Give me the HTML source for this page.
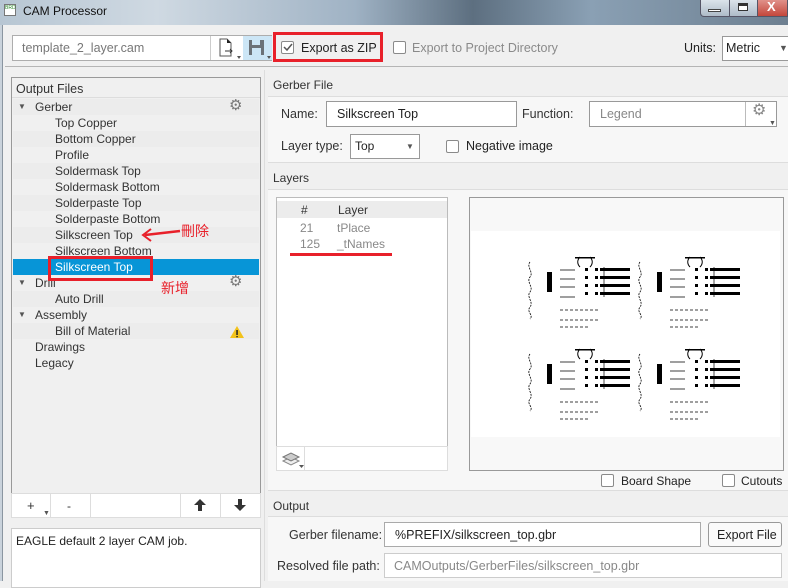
<!DOCTYPE html>
<html><head><meta charset="utf-8"><style>
*{box-sizing:border-box;margin:0;padding:0}
body{width:788px;height:581px;overflow:hidden;background:#f0f0f0;font-family:"Liberation Sans","Noto Sans CJK SC",sans-serif;font-size:12px;color:#333;position:relative}
.a{position:absolute}
.t{position:absolute;white-space:nowrap;line-height:16px}
.inp{position:absolute;background:#fff;border:1px solid #adadad}
.cb{position:absolute;width:13px;height:13px;border:1px solid #8a8a8a;border-radius:2px;background:#fff}
.row{position:absolute;left:13px;width:246px;height:16px;line-height:16px;white-space:nowrap}
.red{color:#e8202a}
</style></head><body>
<div class="a" style="left:0;top:0;width:788px;height:25px;background:linear-gradient(90deg,#b7c6d3 0%,#cfd9e2 20%,#9fb2c4 45%,#5d6f80 60%,#8aa0b4 75%,#6d7f90 100%)"></div>
<div class="a" style="left:4px;top:4px;width:12px;height:12px;background:#fff;border:1px solid #777;font-size:5px;color:#2a8a2a;line-height:6px">BRD</div>
<div class="t" style="left:23px;top:3px;color:#111;font-size:12px">CAM Processor</div>
<div class="a" style="left:700px;top:0;width:88px;height:17px;border:1px solid #556;border-top:none;border-radius:0 0 4px 4px;background:linear-gradient(#dbe3ea,#aebbc8)"></div>
<div class="a" style="left:729px;top:0;width:1px;height:17px;background:#556"></div>
<div class="a" style="left:757px;top:0;width:31px;height:17px;background:linear-gradient(#e0918a,#c4473b);border:1px solid #556;border-top:none"></div>
<div class="t" style="left:767px;top:-1px;color:#fff;font-weight:bold;font-size:13px">X</div>
<div class="a" style="left:708px;top:9px;width:13px;height:3px;background:#fff;border:1px solid #444"></div>
<div class="a" style="left:738px;top:3px;width:10px;height:8px;border:1px solid #333;border-top-width:3px;background:#fff"></div>
<div class="a" style="left:0;top:25px;width:3px;height:556px;background:#c9d2db;border-right:1px solid #8a95a0"></div>

<div class="inp" style="left:12px;top:35px;width:260px;height:26px"></div>
<div class="t" style="left:22px;top:40px;color:#777;font-size:12.5px">template_2_layer.cam</div>
<div class="a" style="left:210px;top:36px;width:1px;height:24px;background:#ccc"></div>
<svg class="a" style="left:218px;top:38px" width="24" height="22"><path d="M2 1h7l4 4v13H2z" fill="#fff" stroke="#555"/><path d="M9 1v4h4z" fill="#222"/><path d="M7 13h7M12 11l2 2-2 2" stroke="#333" fill="none"/><path d="M19 18l4 0-2 3z" fill="#555"/></svg>
<div class="a" style="left:243px;top:36px;width:29px;height:24px;background:#cce6f6"></div>
<svg class="a" style="left:248px;top:38px" width="24" height="22"><rect x="1" y="2" width="15" height="15" fill="#6b7278"/><rect x="4" y="2" width="8" height="5" fill="#cce6f6"/><rect x="4" y="10" width="9" height="7" fill="#cce6f6"/><path d="M19 18l4 0-2 3z" fill="#555"/></svg>
<div class="a" style="left:273px;top:32px;width:110px;height:30px;border:3px solid #e8202a"></div>
<div class="cb" style="left:281px;top:41px"></div>
<svg class="a" style="left:283px;top:43px" width="10" height="9"><path d="M1 4l3 3 5-6" stroke="#555" stroke-width="1.5" fill="none"/></svg>
<div class="t" style="left:301px;top:40px;color:#222;font-size:12.5px">Export as ZIP</div>
<div class="cb" style="left:393px;top:41px"></div>
<div class="t" style="left:412px;top:40px;color:#8a8a8a;font-size:12.5px">Export to Project Directory</div>
<div class="t" style="left:684px;top:40px;color:#222;font-size:12.5px">Units:</div>
<div class="inp" style="left:722px;top:36px;width:70px;height:25px;border-color:#999"></div>
<div class="t" style="left:726px;top:40px;color:#222;font-size:12.5px">Metric</div>
<div class="t" style="left:779px;top:40px;font-size:9px;color:#555">▼</div>
<div class="a" style="left:5px;top:66px;width:783px;height:1px;background:#b5b5b5"></div>

<!-- left panel -->
<div class="a" style="left:11px;top:77px;width:250px;height:417px;border:1px solid #999;background:#f0f0f0"></div>
<div class="t" style="left:16px;top:81px;color:#333;font-size:12.5px">Output Files</div>
<div class="a" style="left:12px;top:97px;width:248px;height:1px;background:#ddd"></div>
<div class="row" style="top:99px;background:#ececec"></div>
<div class="row" style="top:131px;background:#ececec"></div>
<div class="row" style="top:163px;background:#ececec"></div>
<div class="row" style="top:195px;background:#ececec"></div>
<div class="row" style="top:227px;background:#ececec"></div>
<div class="row" style="top:259px;background:#0795d7"></div>
<div class="row" style="top:291px;background:#ececec"></div>
<div class="row" style="top:323px;background:#ececec"></div>
<div class="t" style="left:18px;top:99px;font-size:8px;color:#555">▼</div>
<div class="t" style="left:35px;top:99px">Gerber</div>
<div class="t" style="left:55px;top:115px">Top Copper</div>
<div class="t" style="left:55px;top:131px">Bottom Copper</div>
<div class="t" style="left:55px;top:147px">Profile</div>
<div class="t" style="left:55px;top:163px">Soldermask Top</div>
<div class="t" style="left:55px;top:179px">Soldermask Bottom</div>
<div class="t" style="left:55px;top:195px">Solderpaste Top</div>
<div class="t" style="left:55px;top:211px">Solderpaste Bottom</div>
<div class="t" style="left:55px;top:227px">Silkscreen Top</div>
<div class="t" style="left:55px;top:243px">Silkscreen Bottom</div>
<div class="t" style="left:55px;top:259px;color:#fff">Silkscreen Top</div>
<div class="t" style="left:18px;top:275px;font-size:8px;color:#555">▼</div>
<div class="t" style="left:35px;top:275px">Drill</div>
<div class="t" style="left:55px;top:291px">Auto Drill</div>
<div class="t" style="left:18px;top:307px;font-size:8px;color:#555">▼</div>
<div class="t" style="left:35px;top:307px">Assembly</div>
<div class="t" style="left:55px;top:323px">Bill of Material</div>
<div class="t" style="left:35px;top:339px">Drawings</div>
<div class="t" style="left:35px;top:355px">Legacy</div>
<div class="t" style="left:229px;top:98px;font-size:15px;color:#777">⚙</div>
<div class="t" style="left:229px;top:274px;font-size:15px;color:#777">⚙</div>
<svg class="a" style="left:229px;top:325px" width="16" height="14"><path d="M8 1L15 13H1z" fill="#f2c21b"/><rect x="7.3" y="5" width="1.5" height="5" fill="#222"/><rect x="7.3" y="11" width="1.5" height="1.3" fill="#222"/></svg>

<!-- annotations -->
<div class="a" style="left:48px;top:256px;width:105px;height:25px;border:3px solid #e8202a"></div>
<svg class="a" style="left:140px;top:225px" width="42" height="18"><path d="M40 6L5 10" stroke="#e8202a" stroke-width="2.5"/><path d="M11 4L3 10l8 6" stroke="#e8202a" stroke-width="2" fill="none"/></svg>
<div class="t red" style="left:181px;top:222px;font-size:14px;line-height:18px">刪除</div>
<div class="t red" style="left:161px;top:279px;font-size:14px;line-height:18px">新增</div>

<!-- left buttons -->
<div class="a" style="left:11px;top:493px;width:250px;height:25px;background:#fff;border:1px solid #ddd"></div>
<div class="a" style="left:50px;top:493px;width:1px;height:25px;background:#ddd"></div>
<div class="a" style="left:90px;top:493px;width:1px;height:25px;background:#ddd"></div>
<div class="a" style="left:180px;top:493px;width:1px;height:25px;background:#ddd"></div>
<div class="a" style="left:220px;top:493px;width:1px;height:25px;background:#ddd"></div>
<div class="t" style="left:27px;top:498px;font-size:13px">+</div>
<div class="t" style="left:43px;top:506px;font-size:7px;color:#555">▼</div>
<div class="t" style="left:67px;top:498px">-</div>
<svg class="a" style="left:193px;top:498px" width="14" height="14"><path d="M7 1L1 7h4v6h4V7h4z" fill="#333"/></svg>
<svg class="a" style="left:233px;top:498px" width="14" height="14"><path d="M7 13L1 7h4V1h4v6h4z" fill="#333"/></svg>
<div class="inp" style="left:11px;top:528px;width:250px;height:60px;border-color:#ccc"></div>
<div class="t" style="left:16px;top:533px;color:#222">EAGLE default 2 layer CAM job.</div>

<!-- right: gerber file -->
<div class="a" style="left:264px;top:70px;width:1px;height:511px;background:#ddd"></div>
<div class="t" style="left:273px;top:77px">Gerber File</div>
<div class="a" style="left:268px;top:96px;width:520px;height:67px;background:#f7f7f7;border-top:1px solid #ddd;border-bottom:1px solid #ddd"></div>
<div class="t" style="left:281px;top:106px;font-size:12.5px">Name:</div>
<div class="inp" style="left:326px;top:101px;width:191px;height:26px;border-color:#999"></div>
<div class="t" style="left:337px;top:106px;color:#222;font-size:12.5px">Silkscreen Top</div>
<div class="t" style="left:522px;top:106px;font-size:12.5px">Function:</div>
<div class="inp" style="left:589px;top:101px;width:188px;height:26px;border-color:#999"></div>
<div class="a" style="left:745px;top:102px;width:1px;height:24px;background:#bbb"></div>
<div class="t" style="left:600px;top:106px;color:#888;font-size:12.5px">Legend</div>
<div class="t" style="left:752px;top:103px;font-size:16px;color:#888">⚙</div>
<div class="t" style="left:769px;top:116px;font-size:7px;color:#555">▼</div>
<div class="t" style="left:281px;top:138px;font-size:12.5px">Layer type:</div>
<div class="inp" style="left:350px;top:134px;width:70px;height:25px;border-color:#999"></div>
<div class="t" style="left:355px;top:138px;color:#222">Top</div>
<div class="t" style="left:406px;top:139px;font-size:8px;color:#555">▼</div>
<div class="cb" style="left:446px;top:140px"></div>
<div class="t" style="left:466px;top:138px;font-size:12.5px;color:#222">Negative image</div>

<div class="t" style="left:273px;top:170px">Layers</div>
<div class="a" style="left:268px;top:189px;width:520px;height:302px;background:#f7f7f7;border-top:1px solid #ddd;border-bottom:1px solid #ddd"></div>
<div class="inp" style="left:276px;top:197px;width:172px;height:250px;border-color:#bbb"></div>
<div class="a" style="left:277px;top:201px;width:170px;height:17px;background:#ececec"></div>
<div class="t" style="left:301px;top:202px">#</div>
<div class="t" style="left:338px;top:202px">Layer</div>
<div class="t" style="left:300px;top:220px;color:#888">21</div>
<div class="t" style="left:337px;top:220px;color:#888">tPlace</div>
<div class="t" style="left:300px;top:236px;color:#888">125</div>
<div class="t" style="left:337px;top:236px;color:#888">_tNames</div>
<div class="a" style="left:290px;top:253px;width:102px;height:3px;background:#e8202a"></div>
<div class="inp" style="left:276px;top:446px;width:172px;height:25px;border-color:#ddd"></div>
<div class="a" style="left:304px;top:447px;width:1px;height:23px;background:#ddd"></div>
<svg class="a" style="left:281px;top:449px" width="24" height="20"><path d="M2 12l8-4 8 4-8 4z" fill="#eee" stroke="#888"/><path d="M2 8l8-4 8 4-8 4z" fill="#ccc" stroke="#777"/><path d="M18 16h5l-2.5 3z" fill="#555"/></svg>
<div class="inp" style="left:469px;top:197px;width:315px;height:274px;border-color:#999;background:#f8f8f8"></div>
<div class="a" style="left:471px;top:231px;width:309px;height:206px;background:#fff"></div>
<svg class="a" style="left:520px;top:252px" width="270" height="170">
<defs>
<g id="b">
<path d="M10 10c-4 5 4 10 0 15s4 10 0 15 4 10 0 15 4 8 0 12" fill="none" stroke="#000" stroke-width="0.8" stroke-dasharray="2 1"/>
<rect x="27" y="20" width="5" height="20" fill="#000"/>
<rect x="55" y="5" width="20" height="1.5" fill="#000"/>
<g fill="#000"><rect x="65" y="16" width="3" height="3"/><rect x="65" y="24" width="3" height="3"/><rect x="65" y="32" width="3" height="3"/><rect x="65" y="40" width="3" height="3"/><rect x="75" y="16" width="3" height="3"/><rect x="75" y="24" width="3" height="3"/><rect x="75" y="32" width="3" height="3"/><rect x="75" y="40" width="3" height="3"/>
<rect x="80" y="16" width="30" height="3"/><rect x="80" y="24" width="30" height="3"/><rect x="80" y="32" width="30" height="3"/><rect x="80" y="40" width="30" height="3"/></g>
<path d="M84 15v30M40 18h15M40 27h15M40 35h15M40 45h15" fill="none" stroke="#000" stroke-width="0.7"/>
<path d="M60 5c-3 3-3 7 0 10M70 5c3 3 3 7 0 10" fill="none" stroke="#000" stroke-width="1"/>
<path d="M40 58h40M40 68h40M40 75h30" fill="none" stroke="#000" stroke-width="0.7" stroke-dasharray="3 2"/>
</g>
</defs>
<use href="#b" x="0" y="0"/><use href="#b" x="110" y="0"/><use href="#b" x="0" y="92"/><use href="#b" x="110" y="92"/>
</svg>
<div class="cb" style="left:601px;top:474px"></div>
<div class="t" style="left:621px;top:473px;color:#222">Board Shape</div>
<div class="cb" style="left:722px;top:474px"></div>
<div class="t" style="left:741px;top:473px;color:#222">Cutouts</div>

<div class="t" style="left:273px;top:498px">Output</div>
<div class="a" style="left:268px;top:516px;width:520px;height:65px;background:#f7f7f7;border-top:1px solid #ddd"></div>
<div class="t" style="left:289px;top:527px;font-size:12.5px">Gerber filename:</div>
<div class="inp" style="left:384px;top:522px;width:317px;height:25px;border-color:#aaa"></div>
<div class="t" style="left:395px;top:527px;color:#222;font-size:12.5px">%PREFIX/silkscreen_top.gbr</div>
<div class="a" style="left:708px;top:522px;width:74px;height:25px;border:1px solid #999;border-radius:3px;background:#fafafa"></div>
<div class="t" style="left:717px;top:527px;color:#222;font-size:12.5px">Export File</div>
<div class="t" style="left:277px;top:558px;font-size:12.5px">Resolved file path:</div>
<div class="inp" style="left:384px;top:553px;width:398px;height:25px;border-color:#ccc"></div>
<div class="t" style="left:394px;top:558px;color:#888;font-size:12.5px">CAMOutputs/GerberFiles/silkscreen_top.gbr</div>
</body></html>
